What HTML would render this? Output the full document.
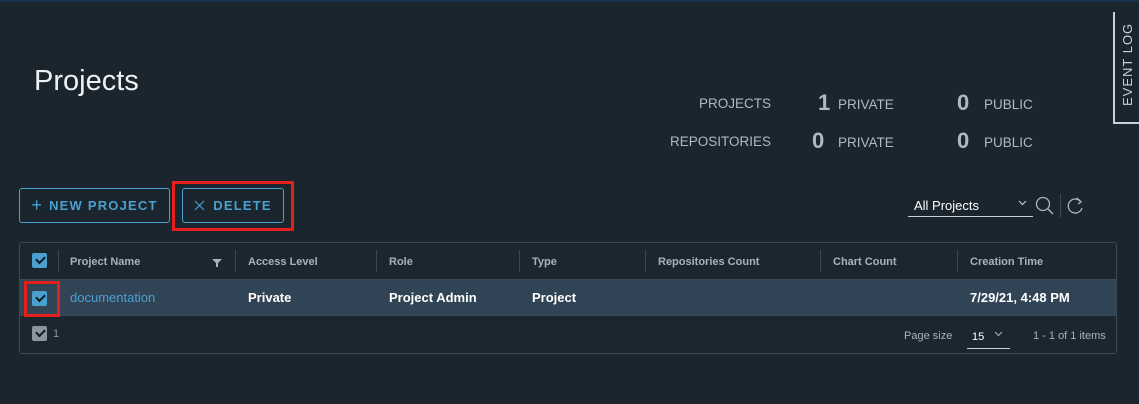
<!DOCTYPE html>
<html><head><meta charset="utf-8"><style>
*{box-sizing:border-box;margin:0;padding:0}
body{width:1139px;height:404px;background:#1b252d;font-family:"Liberation Sans",sans-serif;position:relative;overflow:hidden;color:#e9ecef}
.topbar{position:absolute;left:0;top:0;width:1139px;height:2px;background:#17324a}
.a{position:absolute;white-space:nowrap}
h1{position:absolute;left:34px;top:65px;font-size:29px;font-weight:normal;color:#eef1f3}
.lab{font-size:13.5px;color:#acbac3}
.num{font-size:22px;font-weight:bold;color:#acbac3}
.btn{position:absolute;height:35px;border:1px solid #4aa0cf;border-radius:3px;color:#4aa0cf;font-size:13px;letter-spacing:1.2px;font-weight:bold;display:flex;align-items:center;justify-content:center}
.red{position:absolute;border:3px solid #e3201b}
.tbl{position:absolute;left:19px;top:242px;width:1098px;height:112px;border:1px solid #3b4953;border-radius:3px;background:#1c262e}
.th{font-size:11px;font-weight:bold;color:#a6b3bc;top:256px}
.div{position:absolute;top:250px;width:1px;height:22px;background:#3b4953}
.row{position:absolute;left:20px;top:279px;width:1096px;height:37px;background:#314455;border-top:1px solid #3b4953;border-bottom:1px solid #3b4953}
.td{font-size:13px;font-weight:bold;color:#fff;top:290px}
.cb{position:absolute;width:15px;height:15px;border-radius:2px;background:#4aa0cf}
.cb:after{content:"";position:absolute;left:4px;top:3px;width:7px;height:4px;border-left:2px solid #0c1a24;border-bottom:2px solid #0c1a24;transform:rotate(-45deg)}
.ev{position:absolute;left:1113px;top:12px;width:26px;height:112px;border-left:2px solid #c9d1d6;border-bottom:2px solid #c9d1d6;background:#1b252d}
</style></head><body>
<div class="topbar"></div>
<h1>Projects</h1>
<div class="a lab" style="right:368px;top:96px">PROJECTS</div>
<div class="a num" style="left:818px;top:90px">1</div>
<div class="a lab" style="left:838px;top:97px">PRIVATE</div>
<div class="a num" style="left:957px;top:90px">0</div>
<div class="a lab" style="left:984px;top:97px">PUBLIC</div>
<div class="a lab" style="right:368px;top:134px">REPOSITORIES</div>
<div class="a num" style="left:812px;top:128px">0</div>
<div class="a lab" style="left:838px;top:135px">PRIVATE</div>
<div class="a num" style="left:957px;top:128px">0</div>
<div class="a lab" style="left:984px;top:135px">PUBLIC</div>
<div class="ev"><div class="a" style="left:5px;top:94px;transform:rotate(-90deg);transform-origin:0 0;font-size:13px;letter-spacing:1px;color:#c9d1d6">EVENT LOG</div></div>

<div class="btn" style="left:19px;top:188px;width:151px"><span style="font-size:18px;font-weight:normal;margin-right:6px">+</span>NEW PROJECT</div>
<div class="btn" style="left:182px;top:188px;width:102px"><svg width="11" height="11" viewBox="0 0 11 11" style="margin-right:8px" stroke="#4aa0cf" stroke-width="1.2"><path d="M1 1L10 10M10 1L1 10"/></svg>DELETE</div>
<div class="red" style="left:172px;top:181px;width:122px;height:50px"></div>

<div class="a" style="left:914px;top:198px;font-size:13px;color:#fff">All Projects</div>
<svg class="a" style="left:1018px;top:200px" width="9" height="6" viewBox="0 0 9 6" fill="none" stroke="#c9d1d6" stroke-width="1.1"><path d="M1 1L4.5 4.5L8 1"/></svg>
<div class="a" style="left:908px;top:216px;width:125px;height:1px;background:#c9d1d6"></div>
<svg class="a" style="left:1035px;top:196px" width="20" height="20" viewBox="0 0 20 20" fill="none" stroke="#aab6be" stroke-width="1.3"><circle cx="8" cy="8" r="6.5"/><path d="M12.5 12.5L18 18"/></svg>
<div class="a" style="left:1060px;top:194px;width:1px;height:24px;background:#3b4953"></div>
<svg class="a" style="left:1067px;top:197px" width="18" height="18" viewBox="0 0 18 18" fill="none" stroke="#aab6be" stroke-width="1.3"><path d="M14 5A7 7 0 1 0 15 11"/><path d="M10 1L14 5L11 7"/></svg>

<div class="tbl"></div>
<div class="cb" style="left:32px;top:253px"></div>
<div class="div" style="left:58px"></div>
<div class="a th" style="left:70px">Project Name</div>
<svg class="a" style="left:212px;top:258px" width="10" height="10" viewBox="0 0 10 10"><path d="M0 1H10L6 5V9H4V5Z" fill="#a6b3bc"/></svg>
<div class="div" style="left:235px"></div>
<div class="a th" style="left:248px">Access Level</div>
<div class="div" style="left:376px"></div>
<div class="a th" style="left:389px">Role</div>
<div class="div" style="left:519px"></div>
<div class="a th" style="left:532px">Type</div>
<div class="div" style="left:645px"></div>
<div class="a th" style="left:658px">Repositories Count</div>
<div class="div" style="left:820px"></div>
<div class="a th" style="left:833px">Chart Count</div>
<div class="div" style="left:957px"></div>
<div class="a th" style="left:970px">Creation Time</div>

<div class="row"></div>
<div class="cb" style="left:32px;top:291px"></div>
<div class="red" style="left:24px;top:281px;width:36px;height:36px"></div>
<div class="a" style="left:70px;top:290px;font-size:13px;color:#4aa0cf">documentation</div>
<div class="a td" style="left:248px">Private</div>
<div class="a td" style="left:389px">Project Admin</div>
<div class="a td" style="left:532px">Project</div>
<div class="a td" style="left:970px">7/29/21, 4:48 PM</div>

<div class="cb" style="left:32px;top:326px;background:#8c959b"></div>
<div class="a" style="left:53px;top:328px;font-size:11px;color:#8c959b">1</div>
<div class="a" style="left:904px;top:330px;font-size:11px;color:#a6b3bc">Page size</div>
<div class="a" style="left:972px;top:331px;font-size:11px;color:#fff">15</div>
<svg class="a" style="left:994px;top:331px" width="9" height="6" viewBox="0 0 9 6" fill="none" stroke="#a6b3bc" stroke-width="1"><path d="M1 1L4.5 4.5L8 1"/></svg>
<div class="a" style="left:967px;top:348px;width:43px;height:1px;background:#c9d1d6"></div>
<div class="a" style="left:1033px;top:330px;font-size:11px;color:#a6b3bc">1 - 1 of 1 items</div>
</body></html>
